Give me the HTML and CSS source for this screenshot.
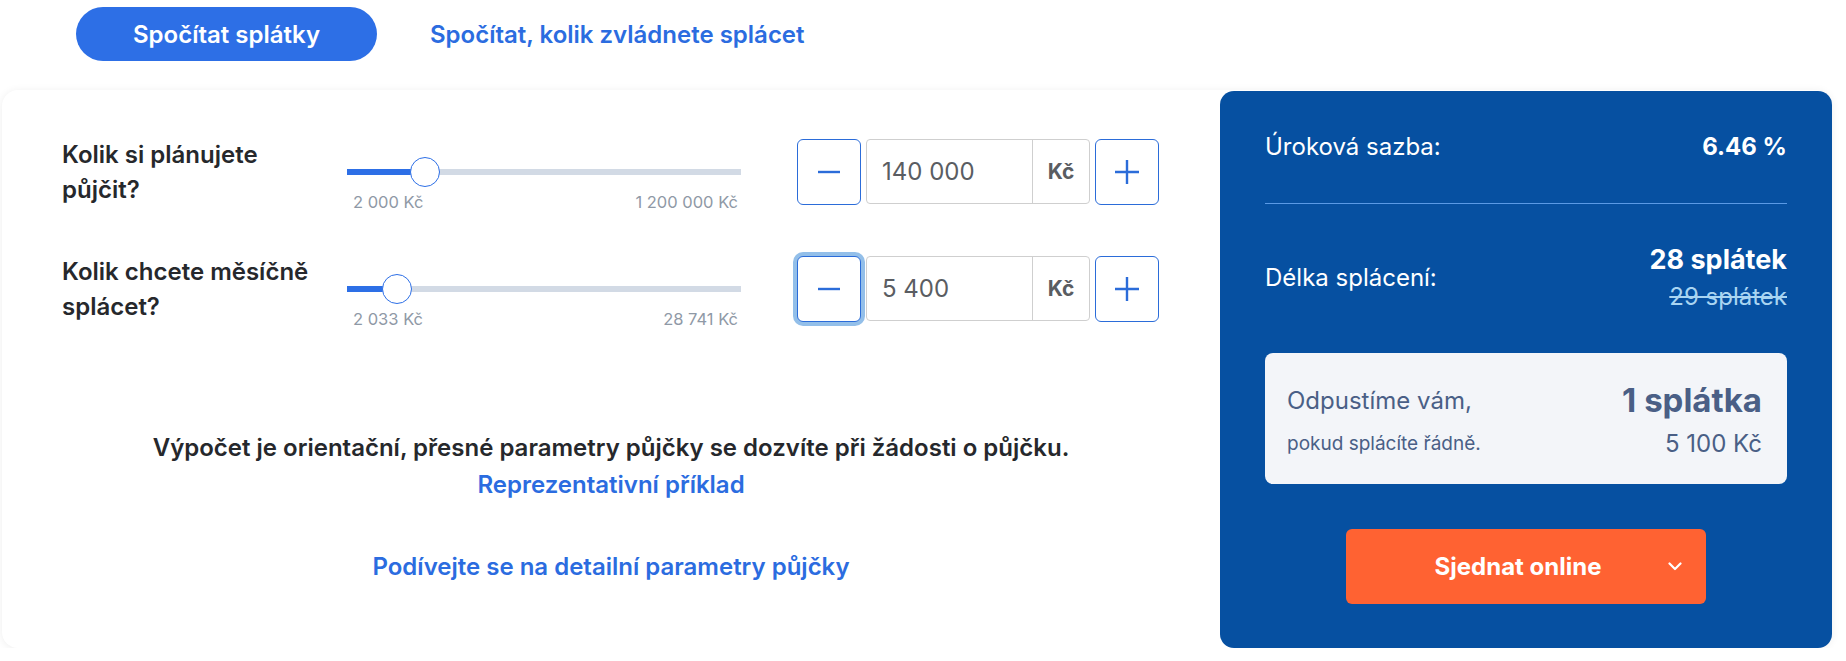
FILE: index.html
```html
<!DOCTYPE html>
<html lang="cs">
<head>
<meta charset="utf-8">
<title>Kalkulačka půjčky</title>
<link rel="stylesheet" href="styles.css">
</head>
<body>
<div class="page">
  <nav class="tabs">
    <button class="tab tab-active">Spočítat splátky</button>
    <button class="tab">Spočítat, kolik zvládnete splácet</button>
  </nav>

  <section class="calc">
    <div class="calc-main">
      <div class="rows">
        <div class="row">
          <div class="row-label">Kolik si plánujete půjčit?</div>
          <div class="slider">
            <div class="track">
              <div class="track-fill" style="width: 19.8%"></div>
              <div class="thumb" style="left: 19.8%"></div>
            </div>
            <div class="slider-limits"><span>2 000 Kč</span><span>1 200 000 Kč</span></div>
          </div>
          <div class="stepper">
            <button class="step-btn" aria-label="Snížit">
              <svg width="22" height="22" viewBox="0 0 22 22"><path d="M0 11h22" stroke="#2b6cd9" stroke-width="2.4"/></svg>
            </button>
            <div class="field"><span class="field-value">140 000</span><span class="field-unit">Kč</span></div>
            <button class="step-btn" aria-label="Zvýšit">
              <svg width="24" height="24" viewBox="0 0 24 24"><path d="M0 12h24M12 0v24" stroke="#2b6cd9" stroke-width="2.4"/></svg>
            </button>
          </div>
        </div>

        <div class="row">
          <div class="row-label">Kolik chcete měsíčně splácet?</div>
          <div class="slider">
            <div class="track">
              <div class="track-fill" style="width: 12.7%"></div>
              <div class="thumb" style="left: 12.7%"></div>
            </div>
            <div class="slider-limits"><span>2 033 Kč</span><span>28 741 Kč</span></div>
          </div>
          <div class="stepper">
            <button class="step-btn step-focus" aria-label="Snížit">
              <svg width="22" height="22" viewBox="0 0 22 22"><path d="M0 11h22" stroke="#2b6cd9" stroke-width="2.4"/></svg>
            </button>
            <div class="field"><span class="field-value">5 400</span><span class="field-unit">Kč</span></div>
            <button class="step-btn" aria-label="Zvýšit">
              <svg width="24" height="24" viewBox="0 0 24 24"><path d="M0 12h24M12 0v24" stroke="#2b6cd9" stroke-width="2.4"/></svg>
            </button>
          </div>
        </div>
      </div>

      <p class="note">Výpočet je orientační, přesné parametry půjčky se dozvíte při žádosti o půjčku.<br><a class="link" href="#">Reprezentativní příklad</a></p>
      <p class="detail"><a class="link" href="#">Podívejte se na detailní parametry půjčky</a></p>
    </div>

    <aside class="summary">
      <div class="sum-row sum-rate">
        <span class="sum-label">Úroková sazba:</span>
        <span class="sum-value">6.46 %</span>
      </div>
      <div class="sum-row sum-term">
        <span class="sum-label">Délka splácení:</span>
        <span class="sum-values">
          <span class="sum-value sum-value-lg">28 splátek</span>
          <span class="sum-old">29 splátek</span>
        </span>
      </div>
      <div class="bonus">
        <div class="bonus-line">
          <span class="bonus-text">Odpustíme vám,</span>
          <span class="bonus-big">1 splátka</span>
        </div>
        <div class="bonus-line bonus-line2">
          <span class="bonus-small">pokud splácíte řádně.</span>
          <span class="bonus-amount">5 100 Kč</span>
        </div>
      </div>
      <button class="cta">
        <span class="cta-text">Sjednat online</span>
        <svg class="cta-chevron" width="14" height="9" viewBox="0 0 14 9"><path d="M1.5 1.5l5.5 5.5 5.5-5.5" fill="none" stroke="#fff" stroke-width="2.2" stroke-linecap="round" stroke-linejoin="round"/></svg>
      </button>
    </aside>
  </section>
</div>
</body>
</html>
```

FILE: styles.css
```css
* { box-sizing: border-box; }

html, body {
  margin: 0;
  padding: 0;
  background: #ffffff;
  font-family: Inter, "Noto Sans", "Liberation Sans", sans-serif;
  color: #272a2f;
}

.page {
  padding: 7px 14px 0 2px;
}

.tabs {
  display: flex;
  align-items: center;
  margin-left: 74px;
  height: 54px;
}

.tab {
  height: 54px;
  padding: 0 53px;
  border: none;
  border-radius: 27px;
  background: transparent;
  color: #2b6ce0;
  font-family: inherit;
  font-size: 24px;
  font-weight: 600;
  cursor: pointer;
}

.tab-active {
  background: #2d6fe6;
  color: #ffffff;
  padding: 0 57px;
}

.calc {
  display: flex;
  margin-top: 29px;
  height: 558px;
  background: #ffffff;
  border-radius: 16px;
  box-shadow: 0 1px 8px rgba(0, 0, 0, 0.07);
}

.calc-main {
  flex: 1;
  padding-top: 49px;
}

.rows {
  padding-left: 60px;
}

.row {
  display: grid;
  grid-template-columns: 285px 394px auto;
  grid-template-rows: 66px;
  align-items: center;
  margin-bottom: 51px;
}

.row-label {
  font-size: 24px;
  font-weight: 600;
  line-height: 35px;
  color: #26282c;
  width: 260px;
}

.slider {
  align-self: start;
  margin-top: 17px;
  width: 394px;
}

.track {
  position: relative;
  height: 32px;
}

.track::before {
  content: "";
  position: absolute;
  left: 0;
  right: 0;
  top: 13px;
  height: 6px;
  background: #d2dae5;
}

.track-fill {
  position: absolute;
  left: 0;
  top: 13px;
  height: 6px;
  background: #2d6fe6;
}

.thumb {
  position: absolute;
  top: 1px;
  width: 30px;
  height: 30px;
  margin-left: -15px;
  background: #ffffff;
  border: 1px solid #2d6fe6;
  border-radius: 50%;
}

.slider-limits {
  display: flex;
  justify-content: space-between;
  padding: 0 3px 0 6px;
  margin-top: 4px;
  font-size: 16.5px;
  line-height: 20px;
  color: #8f99a6;
}

.stepper {
  display: flex;
  gap: 5px;
  margin-left: 56px;
}

.step-btn {
  flex: none;
  width: 64px;
  height: 66px;
  display: flex;
  align-items: center;
  justify-content: center;
  padding: 0;
  background: #ffffff;
  border: 1px solid #2b6cd9;
  border-radius: 6px;
  cursor: pointer;
}

.step-focus {
  box-shadow: 0 0 0 4px #93bfe9;
}

.field {
  flex: none;
  display: flex;
  width: 224px;
  height: 65px;
  border: 1px solid #cfcfcf;
  border-radius: 4px;
  background: #ffffff;
}

.field-value {
  flex: 1;
  display: flex;
  align-items: center;
  padding-left: 15px;
  font-size: 24px;
  color: #5a5d62;
}

.field-unit {
  width: 57px;
  display: flex;
  align-items: center;
  justify-content: center;
  border-left: 1px solid #cfcfcf;
  font-size: 21px;
  font-weight: 700;
  color: #5a5d62;
}

.note {
  margin: 107px 0 0;
  text-align: center;
  font-size: 24px;
  font-weight: 600;
  line-height: 37px;
  color: #26282c;
}

.detail {
  margin: 45px 0 0;
  text-align: center;
  font-size: 24px;
  font-weight: 600;
  line-height: 37px;
}

.link {
  color: #2b6ce0;
  text-decoration: none;
}

.summary {
  width: 612px;
  flex: none;
  margin-top: 1px;
  padding: 40px 45px 44px;
  background: #0650a1;
  border-radius: 14px;
  color: #ffffff;
  display: flex;
  flex-direction: column;
}

.sum-row {
  display: flex;
  justify-content: space-between;
  align-items: center;
}

.sum-rate {
  box-sizing: content-box;
  height: 32px;
  padding-bottom: 40px;
  border-bottom: 1px solid #5a9ae6;
}

.sum-label {
  font-size: 24px;
  font-weight: 400;
  line-height: 32px;
}

.sum-value {
  font-size: 24px;
  font-weight: 700;
  line-height: 32px;
}

.sum-value-lg {
  font-size: 27px;
}

.sum-term {
  padding-top: 40px;
}

.sum-values {
  display: flex;
  flex-direction: column;
  align-items: flex-end;
}

.sum-old {
  margin-top: 6px;
  font-size: 24px;
  line-height: 30px;
  color: #a9d5f2;
  text-decoration: line-through;
}

.bonus {
  margin-top: 41px;
  height: 131px;
  padding: 29px 25px 0 22px;
  background: #f3f5f9;
  border-radius: 8px;
  color: #4a5f86;
}

.bonus-line {
  display: flex;
  justify-content: space-between;
  align-items: center;
  height: 36px;
}

.bonus-line2 {
  margin-top: 10px;
  height: 30px;
}

.bonus-text {
  font-size: 24px;
}

.bonus-big {
  font-size: 33px;
  font-weight: 700;
}

.bonus-small {
  font-size: 19px;
}

.bonus-amount {
  font-size: 24px;
}

.cta {
  position: relative;
  align-self: center;
  margin-top: 45px;
  width: 360px;
  height: 75px;
  border: none;
  border-radius: 6px;
  background: #ff6232;
  color: #ffffff;
  font-family: inherit;
  font-size: 24px;
  font-weight: 700;
  cursor: pointer;
  display: flex;
  align-items: center;
  justify-content: center;
  padding: 0 16px 0 0;
}

.cta-chevron {
  position: absolute;
  right: 24px;
  top: 33px;
}
```
